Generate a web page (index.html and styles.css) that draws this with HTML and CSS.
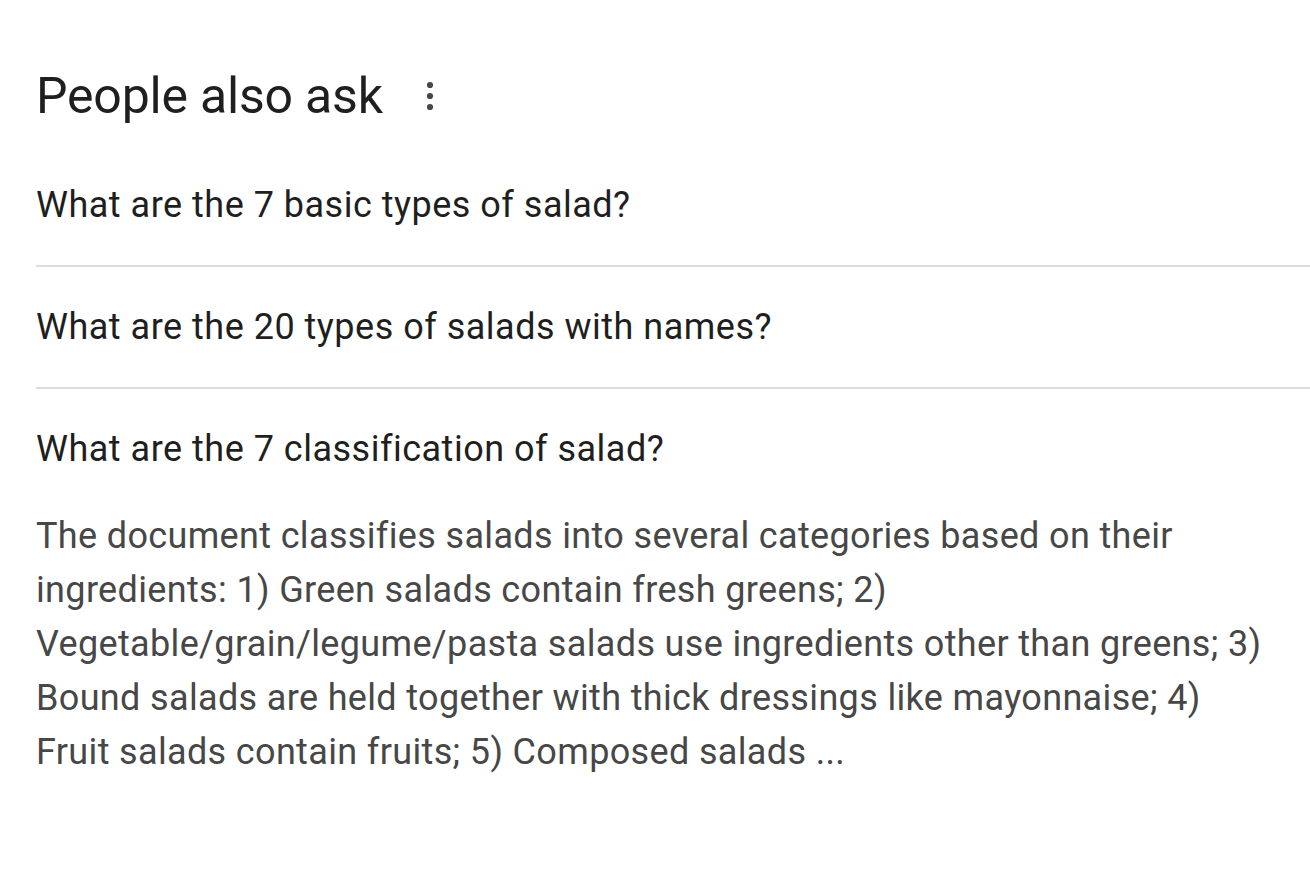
FILE: index.html
```html
<!DOCTYPE html>
<html>
<head>
<meta charset="utf-8">
<link rel="stylesheet" href="styles.css">
</head>
<body>
<div class="paa">
  <div class="paa-head">
    <h2 class="paa-title">People also ask</h2>
    <span class="paa-more" aria-label="More options">
      <svg width="12" height="32" viewBox="0 0 12 32"><circle cx="6" cy="5" r="3.1"/><circle cx="6" cy="16" r="3.1"/><circle cx="6" cy="27" r="3.1"/></svg>
    </span>
  </div>
  <div class="paa-item">
    <div class="paa-q">What are the 7 basic types of salad?</div>
  </div>
  <div class="paa-item">
    <div class="paa-q">What are the 20 types of salads with names?</div>
  </div>
  <div class="paa-item open">
    <div class="paa-q">What are the 7 classification of salad?</div>
  </div>
  <div class="paa-answer">The document classifies salads into several categories based on their ingredients: 1) Green salads contain fresh greens; 2) Vegetable/grain/legume/pasta salads use ingredients other than greens; 3) Bound salads are held together with thick dressings like mayonnaise; 4) Fruit salads contain fruits; 5) Composed salads ...</div>
</div>
</body>
</html>
```

FILE: styles.css
```css
html, body {
  margin: 0;
  padding: 0;
  background: #fff;
}
body {
  font-family: Roboto, "Open Sans", Arial, sans-serif;
}
.paa {
  padding-left: 36px;
}
.paa-head {
  display: flex;
  align-items: center;
  height: 145px;
  box-sizing: border-box;
  padding-top: 46px;
}
.paa-title {
  margin: 0;
  font-size: 50px;
  font-weight: 400;
  color: #1f1f1f;
  line-height: 60px;
  letter-spacing: -0.2px;
}
.paa-more {
  display: flex;
  margin-left: 41px;
  fill: #474747;
}
.paa-item {
  height: 120px;
  display: flex;
  align-items: center;
  border-bottom: 2px solid #dadce0;
}
.paa-item.open {
  border-bottom: none;
}
.paa-q {
  font-size: 36px;
  color: #1f1f1f;
  line-height: 48px;
  letter-spacing: 0.5px;
}
.paa-answer {
  font-size: 36px;
  line-height: 54px;
  color: #474747;
  letter-spacing: 0.35px;
  width: 1244px;
}
```
